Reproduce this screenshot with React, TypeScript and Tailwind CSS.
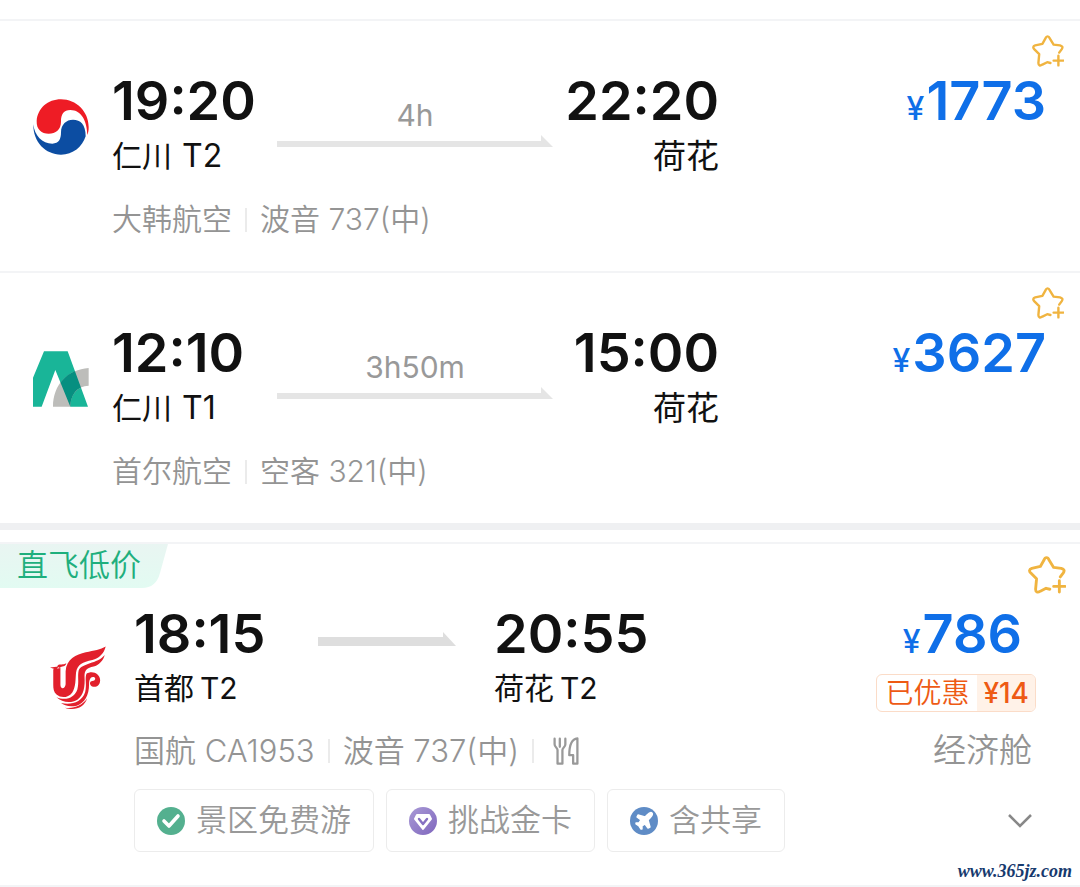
import React from "react"

const FONT = "font-['Inter','Noto_Sans_CJK_SC',sans-serif]"

const KoreanAirLogo = () => (
    <svg viewBox="0 0 168 168" className="w-14 h-14" aria-label="大韩航空">
        <circle cx="84" cy="84" r="83" fill="#fff" />
        <path d="M11 66 C14 28 44 1 84 1 C130 1 167 38 167 84 C167 95 166 100 163 108 C162 66 145 33 112 33 C92 33 84 46 84 68 C84 92 68 104 47 104 C26 104 10 92 11 66 Z" fill="#ee1c25" />
        <path d="M1 76 C4 110 28 134 58 134 C78 134 84 120 84 100 C84 76 100 62 120 62 C142 62 158 76 158 112 C148 144 120 167 84 167 C38 167 0 130 1 76 Z" fill="#0c4da2" />
    </svg>
)

const AirSeoulLogo = () => (
    <svg viewBox="0 0 168 168" className="w-14 h-14" aria-label="首尔航空">
        <defs>
            <clipPath id="letter">
                <path d="M33 1 H104 L165 167 H112 L67 57 L26 167 H0 V80 Z" />
            </clipPath>
        </defs>
        <path d="M33 1 H104 L165 167 H112 L67 57 L26 167 H0 V80 Z" fill="#19b598" />
        <path d="M60 167 C60 100 105 55 167 51 V104 C132 106 113 130 112 167 Z" fill="#bdbdba" />
        <path d="M60 167 C60 100 105 55 167 51 V104 C132 106 113 130 112 167 Z" fill="#078f80" clipPath="url(#letter)" />
    </svg>
)

const AirChinaLogo = () => (
    <svg viewBox="0 0 172 194" className="w-14 h-16" aria-label="国航">
        <g fill="#e2202c">
            <path d="M10 70 L32 66 V118 C32 132 46 132 48 116 V76 C50 40 80 24 110 18 C135 12 155 10 171 0 C166 22 150 36 130 42 C100 48 84 56 80 80 C78 100 80 125 68 142 C56 158 34 160 20 148 C11 140 10 130 10 118 Z" />
            <path d="M168 26 C164 44 150 56 134 62 C114 66 106 72 106 92 C108 124 104 150 84 164 C64 176 36 172 20 156 C50 168 76 156 84 132 C90 110 84 92 88 74 C96 50 146 54 168 26 Z" />
            <path d="M112 84 C130 72 154 84 154 104 C154 122 138 128 128 122 C120 116 122 106 130 106 C140 106 142 96 134 94 C124 92 120 104 120 116 C120 150 106 174 82 182 C60 186 44 182 34 174 C66 180 98 172 108 140 C114 116 106 100 112 84 Z" />
            <path d="M46 188 C72 192 98 182 114 160 C106 186 76 200 46 188 Z" />
            <path d="M0 65 L26 62 L20 72 Z M22 62 C26 50 38 60 50 52 C48 64 36 60 30 66 Z" />
        </g>
    </svg>
)

const StarPlus = ({ className }: { className: string }) => (
    <svg viewBox="0 0 40 40" className={className} fill="none" stroke="#f0b440" strokeWidth="3" strokeLinecap="round" strokeLinejoin="round">
        <path d="M34 22 L37 18 C39 15 38 14 35 13 L27 12 L22 4 C21 1 18 1 17 4 L13 11 L4 13 C1 14 1 16 3 18 L9 24 L8 35 C8 38 10 39 13 37 L19 34 L23 35" />
        <path d="M33 26 V38 M27 32 H39" />
    </svg>
)

const CutleryIcon = () => (
    <svg viewBox="0 0 78 86" className="w-[26px] h-7" fill="none" stroke="#999" strokeWidth="7" strokeLinejoin="round" strokeLinecap="round">
        <path d="M4 5 V22 C4 32 13 32 13 40 V82 H28 V40 C28 32 37 32 37 22 V5 M20 5 V30" />
        <path d="M74 4 V82 H61 V56 H49 C49 28 54 6 74 4 Z" />
    </svg>
)

const CheckBadge = () => (
    <svg viewBox="0 0 28 28" className="w-7 h-7">
        <circle cx="14" cy="14" r="14" fill="#54b08f" />
        <path d="M7 14 L12 19 L21 9" fill="none" stroke="#fff" strokeWidth="3.6" strokeLinecap="round" strokeLinejoin="round" />
    </svg>
)

const DiamondBadge = () => (
    <svg viewBox="0 0 28 28" className="w-7 h-7">
        <defs>
            <linearGradient id="violet" x1="0" y1="0" x2="1" y2="1">
                <stop offset="0" stopColor="#a99ad6" />
                <stop offset="1" stopColor="#7f66bd" />
            </linearGradient>
        </defs>
        <circle cx="14" cy="14" r="14" fill="url(#violet)" />
        <path d="M8 8 H20 L22 12 L14 22 L6 12 Z" fill="#fff" stroke="#fff" strokeWidth="2" strokeLinejoin="round" />
        <path d="M10 12 L14 17 L18 12" fill="none" stroke="#8670c2" strokeWidth="2.4" strokeLinecap="round" strokeLinejoin="round" />
    </svg>
)

const PlaneBadge = () => (
    <svg viewBox="0 0 28 28" className="w-7 h-7">
        <circle cx="14" cy="14" r="14" fill="#5f8cc6" />
        <path d="M22 6 C23 7 22 9 20 11 L18 13 L20 20 L18 21 L15 17 L12 19 V22 L11 22 L9 19 L6 17 L6 16 L9 16 L11 13 L7 10 L8 8 L15 10 L17 8 C19 6 21 5 22 6 Z" fill="#fff" stroke="#fff" strokeWidth="1.4" strokeLinejoin="round" />
    </svg>
)

const Divider = () => <span className="w-0.5 h-6 bg-[#ebebeb]" />

type Flight = {
    logo: React.ReactNode
    depart: string
    from: string
    terminal: string
    duration: string
    arrive: string
    to: string
    airline: string
    plane: string
    price: string
}

const flights: Flight[] = [
    { logo: <KoreanAirLogo />, depart: "19:20", from: "仁川", terminal: "T2", duration: "4h", arrive: "22:20", to: "荷花", airline: "大韩航空", plane: "波音 737(中)", price: "1773" },
    { logo: <AirSeoulLogo />, depart: "12:10", from: "仁川", terminal: "T1", duration: "3h50m", arrive: "15:00", to: "荷花", airline: "首尔航空", plane: "空客 321(中)", price: "3627" },
]

const Price = ({ value }: { value: string }) => (
    <p className="text-[#0f6fe8] font-semibold text-[54px] leading-[60px] whitespace-nowrap">
        <span className="text-[32px] leading-none font-medium mr-0.5">¥</span>{value}
    </p>
)

const FlightRow = ({ flight }: { flight: Flight }) => (
    <li className="relative flex border-t-2 border-gray-100 pl-[33px] pr-[34px] pt-[50px] pb-[29px]">
        <div className="w-[79px] shrink-0 pt-7">{flight.logo}</div>
        <div className="flex-1">
            <div className="flex justify-between">
                <div className="flex w-[65%]">
                    <div className="w-[165px]">
                        <p className="text-[54px] leading-[60px] font-semibold">{flight.depart}</p>
                        <p className="flex gap-2.5 text-3xl leading-[50px]">{flight.from} <span className="text-[32px]">{flight.terminal}</span></p>
                    </div>
                    <div className="flex-1 pt-6 text-center">
                        <p className="text-3xl leading-10 text-[#999]">{flight.duration}</p>
                        <div className="flex items-end">
                            <span className="flex-1 h-1.5 bg-[#e5e5e5]" />
                            <svg viewBox="0 0 12 12" className="w-3 h-3"><path d="M0 0 L12 12 H0 Z" fill="#e5e5e5" /></svg>
                        </div>
                    </div>
                    <div className="w-[166px] text-right">
                        <p className="text-[54px] leading-[60px] font-semibold">{flight.arrive}</p>
                        <p className="text-[33px] leading-[50px]">{flight.to}</p>
                    </div>
                </div>
                <Price value={flight.price} />
            </div>
            <p className="flex items-center gap-[13px] pt-4 text-3xl leading-[45px] font-[350] text-[#949494]">
                {flight.airline}<Divider />{flight.plane}
            </p>
        </div>
        <button aria-label="收藏" className="absolute right-4 top-3.5">
            <StarPlus className="w-8 h-8" />
        </button>
    </li>
)

const tags = [
    { icon: <CheckBadge />, text: "景区免费游" },
    { icon: <DiamondBadge />, text: "挑战金卡" },
    { icon: <PlaneBadge />, text: "含共享" },
]

const DealCard = () => (
    <section className="relative border-y-2 border-gray-100 pb-[33px]">
        <div className="relative w-42 h-11 pl-[17px]">
            <svg viewBox="0 0 168 44" className="absolute inset-0 w-full h-full">
                <defs>
                    <linearGradient id="mint" x1="0" y1="0" x2="0" y2="1">
                        <stop offset="0" stopColor="#e9f5f2" />
                        <stop offset="1" stopColor="#e2fbf2" />
                    </linearGradient>
                </defs>
                <path d="M0 0 H168 L160 29 Q156 44 142 44 H0 Z" fill="url(#mint)" />
            </svg>
            <p className="relative text-[31px] leading-[42px] font-[350] text-[#1faf7d] whitespace-nowrap">直飞低价</p>
        </div>
        <div className="flex pl-[50px] pr-11 pt-4">
            <div className="w-[84px] shrink-0 pt-[42px]"><AirChinaLogo /></div>
            <div className="flex-1">
                <div className="flex">
                    <div className="w-46">
                        <p className="text-[54px] leading-[60px] font-semibold">18:15</p>
                        <p className="flex gap-1.5 text-3xl leading-[48px]">首都 <span>T2</span></p>
                    </div>
                    <svg viewBox="0 0 138 14" className="w-[138px] h-3.5 mt-7"><path d="M0 5 H125 V0 L138 14 H0 Z" fill="#dedede" /></svg>
                    <div className="pl-[38px]">
                        <p className="text-[54px] leading-[60px] font-semibold">20:55</p>
                        <p className="flex gap-1.5 text-3xl leading-[48px]">荷花 <span>T2</span></p>
                    </div>
                </div>
                <p className="flex items-center gap-[13px] pt-4 text-[31px] leading-[45px] font-[350] text-[#949494]">
                    国航 CA1953<Divider />波音 737(中)<Divider /><span className="pl-1.5"><CutleryIcon /></span>
                </p>
                <ul className="flex gap-3 pt-4">
                    {tags.map((tag) => (
                        <li key={tag.text} className="flex items-center gap-[11px] h-[63px] px-[22px] border border-[#ececec] rounded-md text-[31px] font-[350] text-[#999]">
                            {tag.icon}{tag.text}
                        </li>
                    ))}
                </ul>
            </div>
            <div className="flex flex-col items-end">
                <div className="pr-3.5"><Price value="786" /></div>
                <p className="flex mt-2.5 h-[38px] border border-[#fbdcc8] rounded-md text-[28px] leading-[36px] text-[#ee5a14] whitespace-nowrap overflow-hidden">
                    <span className="px-2 font-[350]">已优惠</span>
                    <span className="px-1.5 bg-[#fff2e8] font-medium">¥14</span>
                </p>
                <p className="pt-4 pr-1 text-[33px] leading-[44px] font-[350] text-[#949494]">经济舱</p>
                <button aria-label="展开" className="mt-[42px] mr-1">
                    <svg viewBox="0 0 24 14" className="w-6 h-3.5" fill="none" stroke="#888" strokeWidth="2.5"><path d="M1 1 L12 12 L23 1" /></svg>
                </button>
            </div>
        </div>
        <button aria-label="收藏" className="absolute right-3.5 top-3">
            <StarPlus className="w-[38px] h-[38px]" />
        </button>
    </section>
)

const App = () => {
    return (
        <main className={`${FONT} relative bg-white text-[#111] pt-[19px]`}>
            <ul>
                {flights.map((flight) => <FlightRow key={flight.airline} flight={flight} />)}
            </ul>
            <div className="h-[7px] mb-3 bg-[#eff0f2]" />
            <DealCard />
            <a href="#" className="absolute right-2 bottom-1 font-['Liberation_Serif',serif] italic font-bold text-lg leading-6 text-[#173a6e]">www.365jz.com</a>
        </main>
    )
}

export default App
